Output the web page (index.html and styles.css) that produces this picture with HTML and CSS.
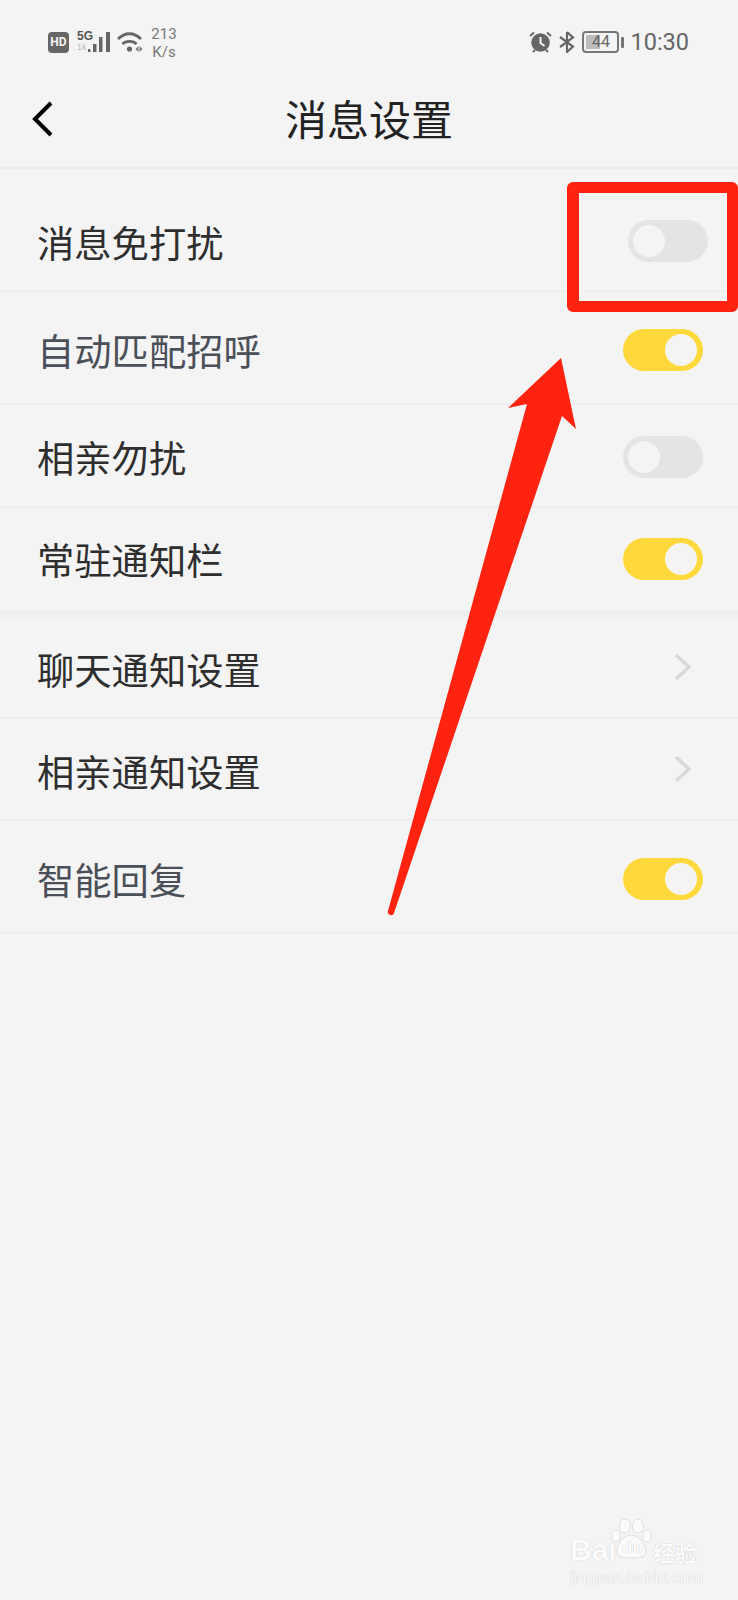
FILE: index.html
```html
<!DOCTYPE html>
<html lang="zh-CN">
<head>
<meta charset="utf-8">
<title>消息设置</title>
<link rel="stylesheet" href="styles.css">
</head>
<body>
<div class="page">
  <div class="status">
    <div class="status-left">
      <span class="hd">HD</span>
      <span class="net"><span class="net-5g">5G</span><span class="net-1k">1k</span></span>
      <svg class="signal" width="23" height="22" viewBox="0 0 23 22"><g fill="#666"><rect x="0" y="18" width="2.500" height="3"/><rect x="5" y="13" width="3.500" height="8"/><rect x="11" y="6" width="3.500" height="15"/><rect x="18" y="1" width="4" height="20"/></g></svg>
      <svg class="wifi" width="26" height="22" viewBox="0 0 26 22"><g fill="none" stroke="#666" stroke-width="2.800"><path d="M1 8C8 1 17 1 24 8"/><path d="M5.500 13C9 9.500 16 9.500 19.500 13"/></g><circle cx="12.500" cy="18" r="2.600" fill="#666"/><path d="M18.500 18l3-3v6zM22.500 15l3 3-3 3z" fill="#777"/></svg>
      <span class="speed"><span>213</span><span>K/s</span></span>
    </div>
    <div class="status-right">
      <svg class="alarm" width="23" height="22" viewBox="0 0 23 22"><circle cx="11.500" cy="11.500" r="9.300" fill="#666"/><path d="M11.500 6v6l4 3" fill="none" stroke="#f4f4f4" stroke-width="2"/><path d="M1 5l4-3.500M22 5l-4-3.500M4 21l2-2M19 21l-2-2" stroke="#666" stroke-width="2" fill="none"/></svg>
      <svg class="bt" width="18" height="22" viewBox="0 0 18 22"><path d="M9 1v20l6-5.500L2 6M9 1l6 5.500L2 16" fill="none" stroke="#666" stroke-width="2.200"/></svg>
      <span class="battery"><span class="battery-fill"></span><span class="battery-num">44</span></span>
      <span class="battery-nub"></span>
      <span class="clock">10:30</span>
    </div>
  </div>
  <header class="nav">
    <svg class="back" width="24" height="38" viewBox="0 0 24 38"><path d="M20 3L4 19l16 16" fill="none" stroke="#000" stroke-width="4"/></svg>
    <h1 class="title">消息设置</h1>
    <span></span>
  </header>
  <section class="list">
    <div class="row row-a"><span class="label">消息免打扰</span><span class="toggle toggle-shift"><span class="knob"></span></span></div>
    <div class="row row-b"><span class="label label-soft">自动匹配招呼</span><span class="toggle on"><span class="knob"></span></span></div>
    <div class="row row-c"><span class="label">相亲勿扰</span><span class="toggle"><span class="knob"></span></span></div>
    <div class="row row-end"><span class="label">常驻通知栏</span><span class="toggle on"><span class="knob"></span></span></div>
    <div class="row row-e"><span class="label">聊天通知设置</span><svg class="chev" width="20" height="30" viewBox="0 0 20 30"><path d="M3 3l13 12L3 27" fill="none" stroke="#d9d9d9" stroke-width="3.500"/></svg></div>
    <div class="row row-e"><span class="label">相亲通知设置</span><svg class="chev" width="20" height="30" viewBox="0 0 20 30"><path d="M3 3l13 12L3 27" fill="none" stroke="#d9d9d9" stroke-width="3.500"/></svg></div>
    <div class="row row-b"><span class="label label-soft">智能回复</span><span class="toggle on"><span class="knob"></span></span></div>
  </section>
  <div class="redbox"></div>
  <svg class="arrow" width="738" height="1600" viewBox="0 0 738 1600"><path d="M561 358L508 408 527 404 388 911a3 3 0 0 0 6 2L562 416 576 429Z" fill="#ff2310"/></svg>
  <div class="mark">
    <span class="mark-bai">Bai</span>
    <svg class="paw" width="44" height="42" viewBox="0 0 44 42"><g fill="#fbfbfb" stroke="#dedede"><ellipse cx="15" cy="8" rx="5.500" ry="7"/><ellipse cx="28" cy="8" rx="5.500" ry="7"/><ellipse cx="6" cy="18" rx="4.500" ry="6"/><ellipse cx="37" cy="18" rx="4.500" ry="6"/><path d="M21 17c7 0 15 9 15 16 0 6-6 7-14 7S7 39 7 33c0-7 7-16 14-16z"/></g></svg>
    <span class="mark-du">du</span>
    <span class="mark-cn">经验</span>
    <span class="mark-url">jingyan.baidu.com</span>
  </div>
</div>
</body>
</html>
```

FILE: styles.css
```css
* { box-sizing: border-box; }
html, body { margin: 0; padding: 0; }
body {
  background: #f4f4f4;
  font-family: "Noto Sans CJK SC", "Noto Sans", sans-serif;
  color: #333;
}
.page { position: relative; width: 738px; height: 1600px; overflow: hidden; }

.status {
  height: 72px;
  display: flex;
  justify-content: space-between;
  padding: 26px 49px 0 48px;
  color: #666;
  font-family: Roboto, sans-serif;
}
.status-left, .status-right { display: flex; align-items: flex-start; }
.status-left svg, .status-right svg { margin-top: 5px; display: block; }
.hd {
  width: 21px; height: 21px; margin-top: 6px;
  background: #666; color: #f4f4f4; border-radius: 4px;
  font: 700 12px/21px Roboto, sans-serif; text-align: center;
}
.net { width: 11px; margin: 5px 0 0 8px; display: flex; flex-direction: column; }
.net-5g { font: 700 12px/11px "Liberation Sans Narrow", "Liberation Sans", sans-serif; color: #555; }
.net-1k { font: 400 9px/10px "Liberation Sans", sans-serif; color: #bbb; }
.signal { margin-left: 0; }
.wifi { margin-left: 6px; }
.speed {
  display: flex; flex-direction: column; align-items: center;
  margin-left: 7px; margin-top: -1px; font-size: 15px; line-height: 18px; color: #777; width: 28px;
}
.alarm { margin-right: 6px; }
.bt { margin-right: 6px; }
.battery {
  position: relative; width: 37px; height: 22px; margin-top: 5px;
  border: 2px solid #777; border-radius: 4px;
  display: block;
}
.battery-fill { position: absolute; left: 2px; top: 2px; bottom: 2px; width: 14px; background: #bdbdbd; }
.battery-num {
  position: relative; display: block; text-align: center;
  font: 400 16px/18px Roboto, sans-serif; color: #666;
}
.battery-nub { width: 3px; height: 11px; margin: 11px 0 0 2px; background: #777; border-radius: 1px; }
.clock { margin-left: 6px; font-size: 23.500px; line-height: 32px; color: #666; }

.nav {
  height: 97px;
  display: grid;
  grid-template-columns: 1fr auto 1fr;
  align-items: center;
  padding: 0 31px 1px;
  border-bottom: 2px solid #ebebeb;
}
.back { display: block; margin-top: 0; }
.title {
  margin: 0;
  font-size: 42px;
  line-height: 60px;
  font-weight: 400;
  color: #222;
  margin-top: -2px;
}

.row {
  display: flex;
  justify-content: space-between;
  align-items: center;
  padding-left: 37px;
  padding-right: 35px;
  border-bottom: 2px solid #efefef;
}
.row-a { height: 123px; padding-top: 24px; }
.row-b { height: 113px; padding-top: 5px; }
.row-c { height: 103px; padding-top: 2px; }
.row-e { height: 102px; padding-top: 3px; }
.row-end { height: 109px; padding-top: 6px; padding-bottom: 6px; border-bottom: 7px solid #efefef; }
.label { font-size: 37.300px; line-height: 50px; color: #2e2e2e; font-weight: 400; }
.label-soft { color: #4a4f58; }
.toggle {
  position: relative;
  width: 80px; height: 42px;
  border-radius: 21px;
  background: #e4e4e4;
  display: block;
}
.toggle-shift { margin-right: -5px; margin-top: -2px; }
.knob {
  position: absolute; left: 5px; top: 5px;
  width: 32px; height: 32px;
  border-radius: 50%;
  background: #f4f4f4;
}
.toggle.on { background: #ffd93b; }
.toggle.on .knob { left: auto; right: 6px; }
.chev { display: block; margin-right: 10px; margin-top: -3px; }

.redbox {
  position: absolute;
  left: 567px; top: 182px;
  width: 171px; height: 130px;
  border: 11px solid #ff2310;
  border-left-width: 12px;
  border-radius: 6px;
}
.arrow { position: absolute; left: 0; top: 0; }

.mark { position: absolute; left: 570px; top: 1518px; width: 168px; height: 70px; color: #fbfbfb; }
.mark span { position: absolute; text-shadow: 0 0 1px #cfcfcf, 0 0 1px #cfcfcf; white-space: nowrap; }
.mark-bai { left: 0; top: 15px; font: 700 30px/34px "Liberation Sans", sans-serif; }
.paw { position: absolute; left: 40px; top: 0; }
.mark-du { left: 52px; top: 20px; font: 700 17px/20px "Liberation Sans", sans-serif; color: #fbfbfb; }
.mark-cn { left: 83px; top: 18px; font: 700 22px/30px "Noto Sans CJK SC", sans-serif; }
.mark-url { left: 0; top: 49px; font: 400 16.500px/20px "Liberation Sans", sans-serif; }
```
